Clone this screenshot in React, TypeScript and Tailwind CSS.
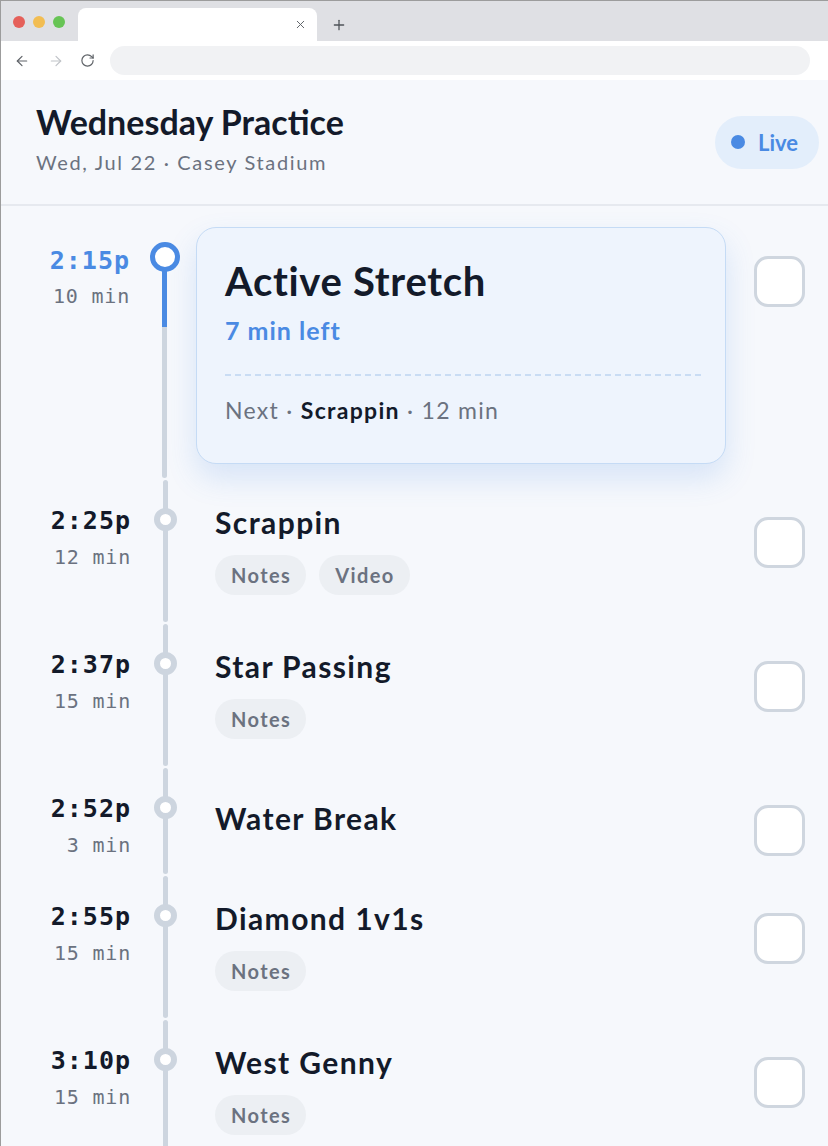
import { ArrowLeft, ArrowRight, RotateCw, X, Plus } from "lucide-react";

type Item = { time: string; dur: string; title: string; tags: string[] };

const items: Item[] = [
  { time: "2:25p", dur: "12 min", title: "Scrappin", tags: ["Notes", "Video"] },
  { time: "2:37p", dur: "15 min", title: "Star Passing", tags: ["Notes"] },
  { time: "2:52p", dur: "3 min", title: "Water Break", tags: [] },
  { time: "2:55p", dur: "15 min", title: "Diamond 1v1s", tags: ["Notes"] },
  { time: "3:10p", dur: "15 min", title: "West Genny", tags: ["Notes"] },
];

const sans = "font-['Lato','Noto_Sans',sans-serif]";
const mono = "font-['DejaVu_Sans_Mono','Liberation_Mono',monospace]";

function Checkbox() {
  return <div className="h-[51px] w-[51px] rounded-[14px] border-[3px] border-[#cfd6df] bg-white" />;
}

function Row({ item }: { item: Item }) {
  const hasTags = item.tags.length > 0;
  return (
    <div className={`flex pl-[36px] pr-[24px] ${hasTags ? "h-[144px]" : "h-[108px]"}`}>
      <div className={`w-[94px] shrink-0 pt-[27px] text-right ${mono}`}>
        <div className="text-[25px] font-bold leading-[30px] tracking-[1px] text-[#131a2a]">{item.time}</div>
        <div className="mt-[9px] text-[20px] leading-[24px] tracking-[0.8px] text-[#6b7280]">{item.dur}</div>
      </div>
      <div className="relative w-[70px] shrink-0">
        <div className="absolute bottom-[1px] left-[32px] top-[1px] w-[5px] rounded-full bg-[#cdd5df]" />
        <div className="absolute left-[23px] top-[28.5px] h-[23px] w-[23px] rounded-full border-[6px] border-[#cdd5df] bg-white" />
      </div>
      <div className={`flex-1 pl-[14px] ${hasTags ? "pt-[25px]" : "pt-[33px]"}`}>
        <div className="text-[30px] font-bold leading-[36px] tracking-[1.4px] text-[#131a2a]">{item.title}</div>
        {hasTags && (
          <div className="mt-[15px] flex gap-[13px]">
            {item.tags.map((t) => (
              <div
                key={t}
                className="flex h-[40px] items-center rounded-full bg-[#eceff3] pl-[16px] pr-[15px] text-[20px] font-bold tracking-[1.4px] text-[#6b7280]"
              >
                {t}
              </div>
            ))}
          </div>
        )}
      </div>
      <div className="ml-[28px] w-[50px] shrink-0 pt-[38px]">
        <Checkbox />
      </div>
    </div>
  );
}

export default function App() {
  return (
    <div className={`min-h-[1146px] w-full border-l border-t border-[#9c9c9c] bg-[#f6f8fc] ${sans}`}>
      {/* Tab strip */}
      <div className="flex h-[40px] items-start bg-[#dfe0e4]">
        <div className="mt-[15px] flex gap-[8px] pl-[12px]">
          <div className="h-[12px] w-[12px] rounded-full bg-[#e5605a]" />
          <div className="h-[12px] w-[12px] rounded-full bg-[#f2bd52]" />
          <div className="h-[12px] w-[12px] rounded-full bg-[#67c455]" />
        </div>
        <div className="ml-[13px] mt-[7px] flex h-[33px] w-[239px] items-center justify-end rounded-t-[8px] bg-white pr-[10px]">
          <X size={13} strokeWidth={1.8} className="text-[#5f6368]" />
        </div>
        <div className="ml-[14px] mt-[16px]">
          <Plus size={16} strokeWidth={1.9} className="text-[#4f5358]" />
        </div>
      </div>
      {/* Toolbar */}
      <div className="flex h-[39px] items-center bg-white pl-[13px] pr-[18px]">
        <ArrowLeft size={16} strokeWidth={1.8} className="text-[#5f6368]" />
        <ArrowRight size={16} strokeWidth={1.8} className="ml-[18px] text-[#c0c3c8]" />
        <RotateCw size={15} strokeWidth={1.9} className="ml-[16px] text-[#5f6368]" />
        <div className="ml-[15px] h-[29px] flex-1 rounded-full bg-[#f1f2f4]" />
      </div>

      {/* Header */}
      <div className="flex h-[126px] items-center justify-between border-b-2 border-[#e6e9ef] pl-[35px] pr-[9px]">
        <div className="mb-[8px]">
          <div className="text-[34px] font-bold leading-[40px] text-[#131a2a]">Wednesday Practice</div>
          <div className="mt-[8px] text-[20px] leading-[24px] tracking-[1.65px] text-[#6b7280]">
            Wed, Jul 22 · Casey Stadium
          </div>
        </div>
        <div className="flex h-[53px] items-center gap-[13px] rounded-full bg-[#e3eefb] pl-[16px] pr-[21px]">
          <div className="h-[14px] w-[14px] rounded-full bg-[#4a8ae3]" />
          <span className="text-[22px] font-bold text-[#4a8ae3]">Live</span>
        </div>
      </div>

      {/* Active row */}
      <div className="flex h-[273px] pl-[35px] pr-[24px]">
        <div className={`w-[94px] shrink-0 pt-[40px] text-right ${mono}`}>
          <div className="text-[25px] font-bold leading-[30px] tracking-[1px] text-[#4a8ae3]">2:15p</div>
          <div className="mt-[8px] text-[20px] leading-[24px] tracking-[0.8px] text-[#6b7280]">10 min</div>
        </div>
        <div className="relative w-[70px] shrink-0">
          <div className="absolute bottom-[1px] left-[32px] top-[51px] w-[5px] rounded-b-full bg-[#cdd5df]" />
          <div className="absolute left-[32px] top-[51px] h-[70px] w-[5px] bg-[#4a8ae3]" />
          <div className="absolute left-[19.5px] top-[36px] h-[30px] w-[30px] rounded-full border-[5px] border-[#4a8ae3] bg-white" />
        </div>
        <div className="flex-1 pt-[21px]">
          <div className="-ml-[4px] rounded-[20px] border-[1.5px] border-[#c5dbf5] bg-[#eef4fd] pb-[39px] pl-[28px] pr-[23px] pt-[29px] shadow-[0_14px_30px_rgba(74,138,227,0.18)]">
            <div className="text-[40px] font-bold leading-[48px] tracking-[0.7px] text-[#131a2a]">Active Stretch</div>
            <div className="mt-[10px] text-[25px] font-bold leading-[30px] tracking-[1px] text-[#4a8ae3]">
              7 min left
            </div>
            <div className="mt-[29px] h-[2px] bg-[repeating-linear-gradient(90deg,#c9dcf4_0_6px,transparent_6px_10px)]" />
            <div className="mt-[20px] text-[23px] leading-[28px] tracking-[1.3px] text-[#6b7280]">
              Next · <span className="font-bold text-[#131a2a]">Scrappin</span> · 12 min
            </div>
          </div>
        </div>
        <div className="ml-[28px] w-[50px] shrink-0 pt-[50px]">
          <Checkbox />
        </div>
      </div>

      {items.map((it) => (
        <Row key={it.time} item={it} />
      ))}
    </div>
  );
}
